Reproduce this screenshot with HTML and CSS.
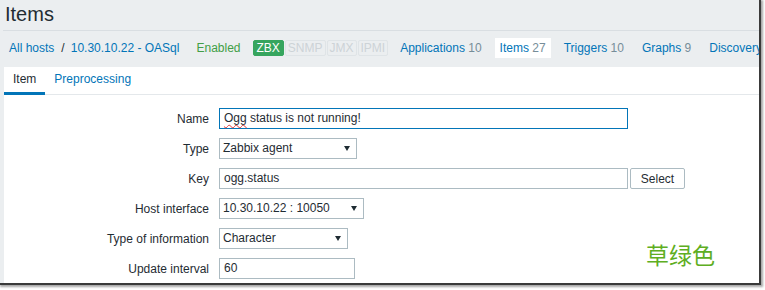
FILE: index.html
```html
<!DOCTYPE html>
<html>
<head>
<meta charset="utf-8">
<link rel="stylesheet" href="styles.css">
</head>
<body>
<div class="window">
  <header class="header">
    <h1 class="title">Items</h1>
  </header>
  <nav class="nav">
    <a class="link">All hosts</a>
    <span class="crumb-sep">/</span>
    <a class="link">10.30.10.22 - OASql</a>
    <span class="status">Enabled</span>
    <div class="badges">
      <span class="badge badge-on">ZBX</span>
      <span class="badge">SNMP</span>
      <span class="badge">JMX</span>
      <span class="badge">IPMI</span>
    </div>
    <div class="navlinks">
      <a class="navlink">Applications <span class="count">10</span></a>
      <a class="navlink navlink-active">Items <span class="count">27</span></a>
      <a class="navlink">Triggers <span class="count">10</span></a>
      <a class="navlink">Graphs <span class="count">9</span></a>
      <a class="navlink">Discovery</a>
    </div>
  </nav>
  <section class="panel">
    <div class="tabs">
      <span class="tab tab-active">Item</span>
      <span class="tab">Preprocessing</span>
    </div>
    <div class="form">
      <label class="label">Name</label>
      <div class="field">
        <div class="input input-focus w-name"><span class="misspelled">Ogg</span> status is not running!</div>
      </div>

      <label class="label">Type</label>
      <div class="field">
        <div class="select w-type"><span>Zabbix agent</span><i class="arrow"></i></div>
      </div>

      <label class="label">Key</label>
      <div class="field field-key">
        <div class="input w-name">ogg.status</div>
        <button class="btn">Select</button>
      </div>

      <label class="label">Host interface</label>
      <div class="field">
        <div class="select w-host"><span>10.30.10.22 : 10050</span><i class="arrow"></i></div>
      </div>

      <label class="label">Type of information</label>
      <div class="field">
        <div class="select w-info"><span>Character</span><i class="arrow"></i></div>
      </div>

      <label class="label">Update interval</label>
      <div class="field">
        <div class="input w-interval">60</div>
      </div>
    </div>
    <div class="note">草绿色</div>
  </section>
</div>
</body>
</html>
```

FILE: styles.css
```css
html, body {
  margin: 0;
  padding: 0;
  background: #ffffff;
}

body {
  width: 765px;
  height: 290px;
  overflow: hidden;
  font-family: Arial, "Liberation Sans", sans-serif;
  font-size: 12px;
  color: #1f2c33;
}

.window {
  position: relative;
  width: 761px;
  height: 285px;
  box-sizing: border-box;
  background: #ebeef0;
  border-right: 2px solid #3a3a3a;
  border-bottom: 2px solid #3a3a3a;
  box-shadow: 1px 1px 2px 1px rgba(0, 0, 0, 0.35);
  overflow: hidden;
  display: flex;
  flex-direction: column;
}

.header {
  height: 31px;
  box-sizing: border-box;
  margin-left: 3px;
  padding: 2px 0 0 2px;
  border-bottom: 1px solid #d9dee2;
}

.title {
  margin: 0;
  font-size: 20px;
  line-height: 24px;
  font-weight: normal;
  color: #1f2c33;
}

.nav {
  display: flex;
  align-items: center;
  height: 20px;
  line-height: 20px;
  padding: 7px 0 9px 9px;
  white-space: nowrap;
}

.link {
  color: #0275b8;
  text-decoration: none;
}

.crumb-sep {
  margin: 0 6px 0 7px;
  color: #1f2c33;
}

.status {
  margin-left: 17px;
  color: #429e47;
}

.badges {
  display: flex;
  gap: 1px;
  margin-left: 12px;
}

.badge {
  height: 16px;
  line-height: 14px;
  box-sizing: border-box;
  padding: 0 2px;
  border: 1px solid #dfe4e7;
  border-radius: 2px;
  color: #cdd3d7;
}

.badge-on {
  background: #36a55e;
  border-color: #36a55e;
  color: #ffffff;
  padding: 0 3px;
}

.navlinks {
  display: flex;
  gap: 8px;
  margin-left: 7px;
}

.navlink {
  padding: 0 5px;
  color: #0275b8;
}

.navlink-active {
  background: #ffffff;
}

.count {
  color: #768d99;
}

.panel {
  position: relative;
  flex: 1;
  margin-left: 4px;
  background: #ffffff;
}

.tabs {
  display: flex;
  height: 27px;
  border-bottom: 1px solid #e4e8eb;
}

.tab {
  height: 28px;
  box-sizing: border-box;
  padding: 0 9px;
  line-height: 25px;
  border-bottom: 3px solid transparent;
  color: #0275b8;
}

.tab-active {
  color: #1f2c33;
  border-bottom-color: #0275b8;
}

.form {
  display: grid;
  grid-template-columns: 205px auto;
  column-gap: 10px;
  row-gap: 9px;
  align-items: center;
  padding-top: 13px;
}

.label {
  text-align: right;
  color: #1f2c33;
}

.field {
  display: flex;
  height: 21px;
}

.field-key {
  gap: 2px;
}

.input,
.select {
  height: 21px;
  box-sizing: border-box;
  border: 1px solid #acbbc2;
  background: #ffffff;
  line-height: 19px;
  padding: 0 4px;
  color: #1f2c33;
  white-space: nowrap;
}

.input-focus {
  border-color: #0275b8;
}

.select {
  display: flex;
  align-items: center;
  justify-content: space-between;
  padding: 0 6px 0 3px;
}

.arrow {
  width: 0;
  height: 0;
  border-left: 3px solid transparent;
  border-right: 3px solid transparent;
  border-top: 5px solid #1f2c33;
}

.misspelled {
  text-decoration: underline wavy #e03a3a;
  text-decoration-thickness: 1px;
  text-underline-offset: 2px;
}

.w-name { width: 409px; }
.w-type { width: 138px; }
.w-host { width: 145px; }
.w-info { width: 129px; }
.w-interval { width: 136px; }

.btn {
  width: 55px;
  height: 21px;
  box-sizing: border-box;
  border: 1px solid #acbbc2;
  border-radius: 2px;
  background: #ffffff;
  font-family: Arial, "Liberation Sans", sans-serif;
  font-size: 12px;
  color: #1f2c33;
  padding: 0;
}

.note {
  position: absolute;
  left: 642px;
  top: 172px;
  font-family: "Noto Sans CJK SC", sans-serif;
  font-size: 23px;
  line-height: 30px;
  color: #5eae22;
}
```
